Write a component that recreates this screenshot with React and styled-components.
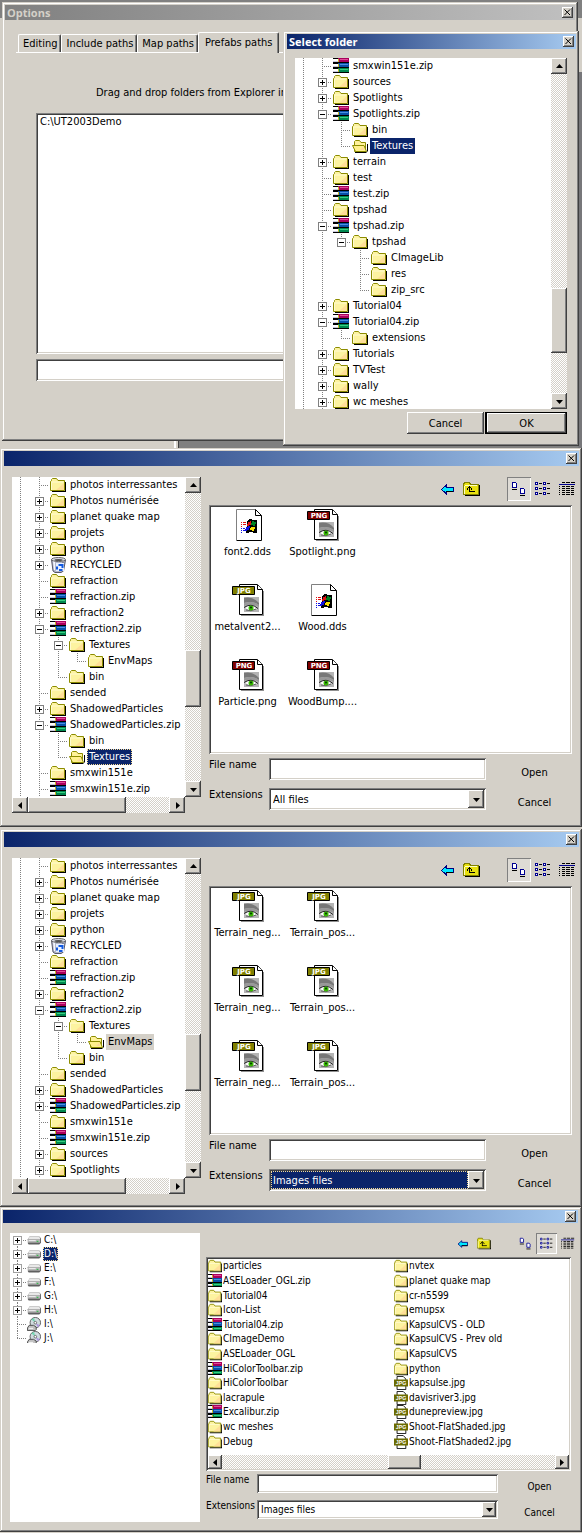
import React from "react";
import styled, { createGlobalStyle, css, ThemeProvider } from "styled-components";

const face = "#d4d0c8";
const navy = "#0a246a";

const regular = { font: 11, line: 14, title: 15, row: 16, cell: 19, icon: 16, tool: 24, bar: 16, field: 22, gap: 8, space: 4, label: 60, button: 75, split: 8, inset: 8, top: 11, foot: 11, frame: "3px 3px 3px 4px" };
const compact = { font: 10, line: 12, title: 13, row: 14, cell: 16, icon: 14, tool: 21, bar: 14, field: 19, gap: 7, space: 3, label: 51, button: 65, split: 6, inset: 7, top: 10, foot: 7, frame: "3px 4px 3px 3px" };

const Global = createGlobalStyle`
  *, *::before, *::after { box-sizing: border-box; }
  body { margin: 0; background: ${face}; color: #000; }
  body, button, input, select { font-family: "DejaVu Sans Condensed", "DejaVu Sans", sans-serif; }
  button, input, select { margin: 0; padding: 0; border: 0; border-radius: 0; font-size: inherit; color: inherit; }
  svg { display: block; flex: none; }
`;

const raised = css`
  background: ${face};
  box-shadow: inset -1px -1px #404040, inset 1px 1px #fff, inset -2px -2px #808080;
`;
const sunken = css`
  background: #fff;
  padding: 2px;
  box-shadow: inset 1px 1px #808080, inset -1px -1px #fff, inset 2px 2px #404040, inset -2px -2px ${face};
`;

const Page = styled.main`
  display: flex;
  flex-direction: column;
`;

const Window = styled.section`
  display: flex;
  flex-direction: column;
  padding: ${(p) => p.theme.frame};
  background: ${face};
  font-size: ${(p) => p.theme.font}px;
  line-height: ${(p) => p.theme.line}px;
  box-shadow: inset -1px -1px #404040, inset 1px 1px ${face}, inset -2px -2px #808080, inset 2px 2px #fff;
`;

const TitleBar = styled.header`
  display: flex;
  align-items: center;
  justify-content: space-between;
  height: ${(p) => p.theme.title}px;
  padding: 0 2px;
  color: ${(p) => (p.$idle ? face : "#fff")};
  background: ${(p) => (p.$idle ? "linear-gradient(90deg, #808080, #c0c0c0)" : `linear-gradient(90deg, ${navy}, #a6caf0)`)};
`;
const Title = styled.h2`
  margin: 0;
  font-family: "Open Sans", sans-serif;
  font-size: 11px;
  font-weight: 700;
  line-height: 15px;
`;
const CloseButton = styled.button`
  ${raised}
  display: grid;
  place-items: center;
  width: 11px;
  height: 11px;
  color: #000;
`;

/* Desktop with the two stacked dialogs */
const Desktop = styled.div`
  position: relative;
  height: 448px;
  background:
    linear-gradient(#808080, #808080) 0 0 / 100% 18px no-repeat,
    linear-gradient(#77777a, #77777a) 100% 72px / 4px 100% no-repeat,
    linear-gradient(#404040, #404040) 178px 100% / 1px 8px no-repeat,
    linear-gradient(#808080, #808080) 179px 100% / 100% 8px no-repeat,
    linear-gradient(#fff, #fff) 174px 100% / 2px 8px no-repeat,
    ${face};
`;
const OptionsWindow = styled(Window)`
  position: absolute;
  top: 2px;
  left: 2px;
  right: 4px;
  padding: 3px;
`;
const FolderWindow = styled(Window)`
  position: absolute;
  top: 31px;
  left: 283px;
  right: 3px;
`;

const Tabs = styled.div`
  display: flex;
  align-items: flex-end;
  margin: 12px 14px 0 11px;
  padding-left: 2px;
  border-bottom: 1px solid #fff;
`;
const Tab = styled.button`
  height: ${(p) => (p.$on ? 21 : 18)}px;
  margin-bottom: ${(p) => (p.$on ? -1 : 0)}px;
  padding: ${(p) => (p.$on ? "0 6px 2px" : "0 3px 0 4px")};
  background: ${face};
  border-top: 1px solid #fff;
  border-left: 1px solid #fff;
  border-right: 1px solid #404040;
  border-radius: 2px 2px 0 0;
  box-shadow: inset -1px 0 #808080;
`;
const OptionsBody = styled.div`
  display: flex;
  flex-direction: column;
  gap: 5px;
  padding: 33px 31px 57px;
`;
const Hint = styled.p`
  margin: 0 0 8px 60px;
  white-space: nowrap;
  overflow: hidden;
`;
const PathList = styled.ul`
  ${sunken}
  margin: 0;
  list-style: none;
  height: 241px;
`;
const PathItem = styled.li`
  padding: 0 2px;
`;
const TextInput = styled.input`
  ${sunken}
  width: 100%;
  min-width: 0;
  height: ${(p) => p.theme.field}px;
  padding: 2px 4px;
  outline: 0;
`;

/* Tree */
const FolderBody = styled.div`
  display: flex;
  flex-direction: column;
  gap: 3px;
  padding: 9px 9px 9px 8px;
`;
const TreeFrame = styled.div`
  display: grid;
  grid-template-columns: minmax(0, 1fr) auto;
  align-self: ${(p) => (p.$fill ? "stretch" : "start")};
  background: ${face};
`;
const Tree = styled.ul`
  margin: 0;
  padding: 0;
  list-style: none;
  background: #fff;
  overflow: hidden;
  ${(p) => p.$clip && css`height: 351px;`}
`;
const DriveTree = styled(Tree)`
  display: grid;
  grid-auto-rows: 1fr;
  height: 110px;
`;
const TreeRow = styled.li`
  display: flex;
  align-items: center;
  height: ${(p) => p.theme.row}px;
  margin-left: ${(p) => (p.theme.row === 16 ? -1 : 0)}px;
`;
const Expander = styled.button`
  background: none;
`;
const NodeIcon = styled.span`
  margin: 0 2px 0 1px;
`;
const NodeLabel = styled.span`
  height: ${(p) => p.theme.row}px;
  line-height: ${(p) => p.theme.row}px;
  padding: 0 ${(p) => (p.theme.row === 16 ? 2 : 1)}px;
  white-space: nowrap;
  ${(p) => p.$state === "muted" && css`background: ${face};`}
  ${(p) => (p.$state === "on" || p.$state === "focus") && css`background: ${navy}; color: #fff;`}
  ${(p) => p.$state === "focus" && css`outline: 1px dotted #f5db95; outline-offset: -1px;`}
`;

/* Scroll bars */
const Bar = styled.div`
  display: flex;
  flex-direction: ${(p) => (p.$down ? "column" : "row")};
  ${(p) => (p.$down ? "width" : "height")}: ${(p) => p.theme.bar}px;
  background: conic-gradient(#fff 25%, ${face} 0 50%, #fff 0 75%, ${face} 0) 0 0 / 2px 2px;
`;
const ArrowButton = styled.button`
  ${raised}
  display: grid;
  place-items: center;
  flex: none;
  width: ${(p) => p.theme.bar}px;
  height: ${(p) => p.theme.bar}px;
`;
const Track = styled.span`
  flex: ${(p) => p.$share} 1 0;
`;
const Thumb = styled.span`
  ${raised}
  flex: ${(p) => p.$share} 1 0;
`;

/* File browser */
const Browser = styled.div`
  display: grid;
  grid-template-columns: ${(p) => (p.theme.row === 16 ? 189 : 190)}px minmax(0, 1fr);
  gap: ${(p) => p.theme.split}px;
  padding: ${(p) => p.theme.top}px 0 ${(p) => p.$foot ?? p.theme.foot}px ${(p) => p.theme.inset}px;
`;
const DriveFrame = styled.div`
  background: #fff;
`;
const Pane = styled.div`
  display: flex;
  flex-direction: column;
  gap: ${(p) => p.theme.space}px;
`;
const Toolbar = styled.div`
  display: flex;
  justify-content: flex-end;
`;
const ToolButton = styled.button`
  display: grid;
  place-items: center;
  width: ${(p) => p.theme.tool}px;
  height: ${(p) => p.theme.tool}px;
  background: ${(p) => (p.$on ? "#dedbd5" : "none")};
  ${(p) => p.$on && css`box-shadow: inset 1px 1px #808080, inset -1px -1px #fff;`}
  ${(p) => p.$apart && css`margin-left: ${p.theme.tool}px;`}
`;
const IconView = styled.ul`
  ${sunken}
  flex: 1;
  display: grid;
  grid-template-columns: repeat(2, 75px);
  grid-auto-rows: 75px;
  margin: 0 7px 0 0;
  list-style: none;
`;
const IconItem = styled.li`
  display: flex;
  flex-direction: column;
  align-items: center;
  gap: 4px;
  padding: 2px 2px 0 0;
  white-space: nowrap;
`;
const ListFrame = styled.div`
  ${sunken}
  display: flex;
  flex-direction: column;
  justify-content: space-between;
  height: 214px;
  margin-right: 7px;
`;
const ListView = styled.ul`
  display: grid;
  grid-template-rows: repeat(13, 1fr);
  grid-auto-flow: column;
  grid-auto-columns: 186px;
  height: 190px;
  margin: 0;
  padding: 0;
  list-style: none;
  overflow: hidden;
`;
const ListItem = styled.li`
  display: flex;
  align-items: center;
  gap: 1px;
  white-space: nowrap;
`;
const Form = styled.form`
  display: grid;
  grid-template-columns: minmax(0, 1fr) ${(p) => p.theme.button}px;
  gap: ${(p) => (p.theme.row === 16 ? 11 : 9)}px;
  margin-right: ${(p) => (p.theme.row === 16 ? 7 : 6)}px;
`;
const Fields = styled.div`
  display: flex;
  flex-direction: column;
  gap: ${(p) => p.theme.gap}px;
`;
const Field = styled.div`
  display: grid;
  grid-template-columns: ${(p) => p.theme.label}px minmax(0, 1fr);
  align-items: start;
`;
const SelectFrame = styled.div`
  ${sunken}
  display: flex;
  height: ${(p) => p.theme.field}px;
`;
const Select = styled.select`
  flex: 1;
  min-width: 0;
  appearance: none;
  padding: 0 2px;
  background: ${(p) => (p.$focus ? navy : "#fff")};
  color: ${(p) => (p.$focus ? "#fff" : "#000")};
  outline: ${(p) => (p.$focus ? "1px dotted #f5db95" : "0")};
  outline-offset: -1px;
`;
const SelectArrow = styled.span`
  ${raised}
  display: grid;
  place-items: center;
  width: ${(p) => p.theme.bar}px;
`;
const Commands = styled.div`
  display: flex;
  flex-direction: column;
  gap: ${(p) => p.theme.gap}px;
  padding-top: 3px;
`;
const FlatButton = styled.button`
  height: ${(p) => p.theme.field}px;
  background: none;
`;
const DialogButtons = styled.div`
  display: flex;
  justify-content: flex-end;
  gap: 1px;
`;
const PushButton = styled.button`
  ${raised}
  width: ${(p) => (p.$main ? 82 : 77)}px;
  height: 22px;
  ${(p) => p.$main && css`
    border: 1px solid #000;
    border-left-width: 2px;
  `}
`;
const Spaced = styled.div`
  margin-top: 2px;
`;

/* Drawings */
const Cross = () => (
  <svg width="7" height="7" viewBox="0 0 7 7" aria-hidden="true">
    <path d="M0.5 0.5 6 6M6 0.5 0.5 6" stroke="#000" fill="none" />
  </svg>
);
const tips = { up: "M0 5 3.5 1 7 5z", down: "M0 2h7L3.5 6z", left: "M5 0v7L1 3.5z", right: "M2 0v7l4-3.5z" };
const Tip = ({ to }) => (
  <svg width="7" height="7" viewBox="0 0 7 7" aria-hidden="true"><path d={tips[to]} /></svg>
);

/* One tree column: | line, t tee, l corner, + and - boxes, m box without a line below, p box without a line above */
function Guide({ kind, compact: small }) {
  const w = small ? 16 : 19;
  const h = small ? 14 : 16;
  const c = small ? 7 : 9;
  const m = small ? 7 : 8;
  const line = small ? "#a0a0a0" : "#808080";
  const box = "+-mp".includes(kind);
  const above = "|t+-lm".includes(kind);
  const below = "|t+-p".includes(kind);
  return (
    <svg width={w} height={h} viewBox={`0 0 ${w} ${h}`} shapeRendering="crispEdges" aria-hidden="true">
      <g stroke="#808080" strokeDasharray="1 1" fill="none">
        {above && <path d={`M${c + 0.5} 0V${m + 1}`} />}
        {below && <path d={`M${c + 0.5} ${m}V${h}`} />}
        {kind !== "|" && kind !== " " && <path d={`M${c} ${m + 0.5}H${w + 1}`} />}
      </g>
      {box && (
        <>
          <rect x={c - 3.5} y={m - 3.5} width={8} height={8} fill="#fff" stroke={line} />
          <path d={`M${c - 2} ${m + 0.5}h5`} stroke="#000" />
          {"+p".includes(kind) && <path d={`M${c + 0.5} ${m - 2}v5`} stroke="#000" />}
        </>
      )}
    </svg>
  );
}

const art = {
  folder: (
    <>
      <path d="M2 14h13V5h1v10H2z" fill="#000" />
      <path d="M.5 13.500V4.500l1-1v-1l1-1h4l1.500 2h6.500v10z" fill="#fdf3a0" stroke="#8c8c00" />
      <path d="M2 5h11M1.500 5v8" stroke="#fffbd0" />
      <path d="M6 13h8V6z" fill="#ffdf98" />
    </>
  ),
  open: (
    <>
      <path d="M3 14h11l1-1V6h1v7l-2 2H3z" fill="#000" />
      <path d="M2.500 13.500v-10l1-1h4l1.500 2h4.500v9z" fill="#fff29a" stroke="#8c8c00" />
      <path d="M.5 7.500h11.500l2.500 6H3.500z" fill="#fff08c" stroke="#8c8c00" />
      <path d="M8 12h4l-1-3z" fill="#ffd79c" />
    </>
  ),
  zip: (
    <g shapeRendering="crispEdges">
      {[["#a8005c", "#e04c98"], ["#0850a8", "#4890e0"], ["#008850", "#38d080"]].map(([dark, light], i) => (
        <g key={dark} transform={`translate(0 ${i * 5})`}>
          <path d="M0 0h5v1H0zM0 4h16v1H0z" fill="#000" />
          <path d="M0 1h5v2H0z" fill="#fff" />
          <path d="M0 3h5v1H0z" fill="#c8c8dc" />
          <path d="M5 0h11v4H5z" fill={dark} />
          <path d="M7 1h8v1H7z" fill={light} />
          <path d="M5 1h1v3H5z" fill="#c8b820" />
        </g>
      ))}
    </g>
  ),
  bin: (
    <>
      <path d="M1.500 2.500 3 14l2 1.500h6L13.500 14 15.500 3z" fill="#b4b8c8" stroke="#585868" />
      <path d="M3 4l1 9h1V4z" fill="#f4f6ff" />
      <path d="M12 5l-1 9h1l2-9z" fill="#7c8098" />
      <ellipse cx="8.500" cy="2.500" rx="7" ry="2" fill="#d8dae4" stroke="#666" />
      <ellipse cx="8.500" cy="3" rx="4" ry="1" fill="#555" />
      <rect x="6" y="6" width="8" height="8" fill="#e8f0ff" />
      <path d="M8.500 8h4v3M7 9.500v3M9 13h3.500" stroke="#1058e0" strokeWidth="2" fill="none" />
    </>
  ),
  drive: (
    <>
      <path d="M1 7l2-3h11l2 2v5l-2 2H2l-1-1z" fill="#606060" />
      <path d="M1 7l2-3h11l1 2v1z" fill="#e8e8e8" />
      <path d="M1 7h14v4H1z" fill="#b8b8b8" />
      <path d="M2 8h8v1H2z" fill="#f0f0f0" />
      <path d="M11 9h2v1h-2z" fill="#10c030" />
    </>
  ),
  disc: (
    <>
      <circle cx="9.500" cy="6.500" r="6" fill="#d0dce0" stroke="#505050" />
      <path d="M9.500 6.500 5 2.500l3-1.500z" fill="#70d8b0" />
      <path d="M9.500 6.500l5 3-2 2.500z" fill="#b098e0" />
      <circle cx="9.500" cy="6.500" r="1.500" fill="#fff" stroke="#606060" />
      <path d="M.5 12.500l2-3h5l3 2v3l-1 1h-9z" fill="#c0c0c0" stroke="#404040" />
      <path d="M2 13h5" stroke="#fff" />
    </>
  ),
  jpg: (
    <>
      <path d="M3.500.5h7l3 3v12h-10z" fill="#fff" stroke="#000" />
      <path d="M0 4h16v8H0z" fill="#6c6c00" />
      <text x="8" y="10" fontSize="6" fontWeight="700" textAnchor="middle" fill="#fff" fontFamily="Liberation Sans, sans-serif">JPG</text>
    </>
  ),
};
const SmallIcon = ({ name, size = 16 }) => (
  <svg width={size} height={size} viewBox="0 0 16 16" aria-hidden="true">{art[name]}</svg>
);

function FileIcon({ type }) {
  if (type === "DDS") {
    return (
      <svg width="32" height="32" viewBox="0 0 32 32" aria-hidden="true">
        <path d="M4.500.5h19l6 6v25h-25z" fill="#fff" />
        <path d="M4.500 31V.5h19" fill="none" stroke="#808080" />
        <path d="M23.500.5v6h6v25h-25" fill="none" stroke="#000" />
        <path d="M23.500.5l6 6" stroke="#000" />
        <g shapeRendering="crispEdges">
          <path d="M15 12l3-2 3 1h4v13l-3 0-3-1-5 1z" fill="#000" />
          <path d="M16 13l3-1v4l-4 1z" fill="#e01010" />
          <path d="M20 12l4 1-1 4-4-1z" fill="#008020" />
          <path d="M14 18l4-1-1 4-4 1z" fill="#1010e0" />
          <path d="M19 18l4 0-1 4-4-1z" fill="#f8e000" />
          <path d="M9 13.500h1m1 0h3M9 15.500h1m1 0h3M9 17.500h1" stroke="#e01010" />
          <path d="M9 19.500h1m1 0h2M9 21.500h1m1 0h2M9 23.500h1" stroke="#1010e0" />
        </g>
      </svg>
    );
  }
  return (
    <svg width="32" height="32" viewBox="0 0 32 32" aria-hidden="true">
      <path d="M31 7h1v25H9v-1h22z" fill="#909090" />
      <path d="M7.500.5h18l5 5v25h-23z" fill="#fff" stroke="#000" />
      <path d="M25.500 1v4.500h5" fill="#fff" stroke="#000" />
      <path d="M12 13h15v15H12z" fill="#b4b4b4" />
      <path d="M12 14q9-2 15 5v2q-7-5-15-2z" fill="#787878" />
      <path d="M12 19q8-3 15 2v2q-7-4-15-1z" fill="#989898" />
      <path d="M13 24q6-5 12 0-6 4-10 1z" fill="#fff" />
      <path d="M12 23.500q7-5 14 1" stroke="#222" fill="none" />
      <path d="M14 26q5 2 10-1" stroke="#606060" fill="none" />
      <circle cx="19" cy="24" r="2.500" fill="#38b800" />
      <circle cx="19" cy="23.500" r="1" fill="#003800" />
      <path d="M.5 2.500h22v8H.5z" fill={type === "PNG" ? "#800000" : "#808000"} stroke="#000" />
      <text x="12" y="9" fontSize="7" fontWeight="700" textAnchor="middle" fill="#fff" fontFamily="DejaVu Sans, sans-serif">{type}</text>
    </svg>
  );
}

const toolArt = {
  back: (
    <>
      <path d="M2.500 8.500 7 4.500v2h7v4H7v2z" fill="#00e8ff" stroke="#000080" />
      <path d="M7 10.500h7" stroke="#000" />
    </>
  ),
  up: (
    <>
      <path d="M2 14h14V4h1v11H2z" fill="#000" />
      <path d="M.5 13.500v-10l1-2h5l1 2h8v10z" fill="#e8e010" stroke="#808000" />
      <path d="M2 4h12M1.500 5v8" stroke="#ffffc0" />
      <path d="M6.500 11V6M4 8.500l2.500-3 2.500 3M6 10.500h6" stroke="#000" fill="none" />
    </>
  ),
  large: (
    <>
      <path d="M1.500 1.500h3l1 1v4h-4zM9.500 7.500h3l1 1v4h-4z" fill="#fff" stroke="#000090" />
      <path d="M1 8.500h5M9 14.500h5" stroke="#000" />
    </>
  ),
  list: (
    <>
      {[2, 7, 12].map((y) => (
        <g key={y}>
          <path d={`M.5 ${y - 0.5}h2v2h-2zM8.500 ${y - 0.5}h2v2h-2z`} fill="#fff" stroke="#000090" />
          <path d={`M4 ${y + 0.5}h3M12 ${y + 0.5}h3`} stroke="#000" />
        </g>
      ))}
    </>
  ),
  details: (
    <>
      <path d="M3 1.500h3m1 0h4m1 0h4" stroke="#000" />
      <path d="M0 3.500h16" stroke="#000090" />
      <path d="M0 5.500h1m2 0h3m1 0h4m1 0h3M0 7.500h1m2 0h3m1 0h4m1 0h3M0 9.500h1m2 0h3m1 0h4m1 0h3M0 11.500h1m2 0h3m1 0h4m1 0h3M0 13.500h1m2 0h3m1 0h4m1 0h3" stroke="#000" />
    </>
  ),
};

/* Composed parts */
function ScrollBar({ down, before, thumb, after }) {
  return (
    <Bar $down={down}>
      <ArrowButton type="button" aria-label={down ? "Scroll up" : "Scroll left"}><Tip to={down ? "up" : "left"} /></ArrowButton>
      <Track $share={before} />
      <Thumb $share={thumb} />
      <Track $share={after} />
      <ArrowButton type="button" aria-label={down ? "Scroll down" : "Scroll right"}><Tip to={down ? "down" : "right"} /></ArrowButton>
    </Bar>
  );
}

function TitleRow({ text, idle }) {
  return (
    <TitleBar $idle={idle}>
      <Title>{text}</Title>
      <CloseButton type="button" aria-label="Close"><Cross /></CloseButton>
    </TitleBar>
  );
}

function TreeNode({ node, small }) {
  const [guides, icon, label, state] = node;
  return (
    <TreeRow>
      {guides.split("").map((kind, i) =>
        "+-mp".includes(kind) ? (
          <Expander key={i} type="button" aria-label={`Toggle ${label}`}><Guide kind={kind} compact={small} /></Expander>
        ) : (
          <Guide key={i} kind={kind} compact={small} />
        )
      )}
      <NodeIcon><SmallIcon name={icon} size={small ? 14 : 16} /></NodeIcon>
      <NodeLabel $state={state}>{label}</NodeLabel>
    </TreeRow>
  );
}

const tools = [["back", "Back"], ["up", "Up one level"], ["large", "Large icons"], ["list", "List"], ["details", "Details"]];
function Tools({ active, small }) {
  const size = small ? 14 : 17;
  return (
    <Toolbar>
      {tools.map(([name, label]) => (
        <ToolButton key={name} type="button" aria-label={label} $on={name === active} $apart={name === "large"}>
          <svg width={size} height={size} viewBox="0 0 17 17" shapeRendering={small ? "auto" : "crispEdges"} aria-hidden="true">{toolArt[name]}</svg>
        </ToolButton>
      ))}
    </Toolbar>
  );
}

function FileForm({ id, filter, focus }) {
  return (
    <Form onSubmit={(e) => e.preventDefault()}>
      <Fields>
        <Field>
          <label htmlFor={`${id}-name`}>File name</label>
          <TextInput id={`${id}-name`} type="text" />
        </Field>
        <Field>
          <label htmlFor={`${id}-ext`}>Extensions</label>
          <SelectFrame>
            <Select id={`${id}-ext`} defaultValue={filter} $focus={focus}>
              <option>All files</option>
              <option>Images files</option>
            </Select>
            <SelectArrow><Tip to="down" /></SelectArrow>
          </SelectFrame>
        </Field>
      </Fields>
      <Commands>
        <FlatButton type="submit">Open</FlatButton>
        <FlatButton type="button">Cancel</FlatButton>
      </Commands>
    </Form>
  );
}

function BrowserWindow({ id, nodes, files, filter, focus, scroll, foot }) {
  return (
    <Window>
      <TitleRow />
      <Browser $foot={foot}>
        <TreeFrame>
          <Tree>{nodes.map((n, i) => <TreeNode key={i} node={n} />)}</Tree>
          <ScrollBar down before={scroll[0]} thumb={scroll[1]} after={scroll[2]} />
          <ScrollBar before={0} thumb={98} after={43} />
        </TreeFrame>
        <Pane>
          <Tools active="large" />
          <IconView>
            {files.map(([type, name], i) => (
              <IconItem key={i}><FileIcon type={type} />{name}</IconItem>
            ))}
          </IconView>
          <FileForm id={id} filter={filter} focus={focus} />
        </Pane>
      </Browser>
    </Window>
  );
}

const folderNodes = [
  ["|t", "zip", "smxwin151e.zip"], ["|+", "folder", "sources"], ["|+", "folder", "Spotlights"], ["|-", "zip", "Spotlights.zip"],
  ["||t", "folder", "bin"], ["||l", "open", "Textures", "on"], ["|+", "folder", "terrain"], ["|t", "folder", "test"],
  ["|t", "zip", "test.zip"], ["|t", "folder", "tpshad"], ["|-", "zip", "tpshad.zip"], ["||m", "folder", "tpshad"],
  ["|| t", "folder", "CImageLib"], ["|| t", "folder", "res"], ["|| l", "folder", "zip_src"], ["|+", "folder", "Tutorial04"],
  ["|-", "zip", "Tutorial04.zip"], ["||l", "folder", "extensions"], ["|+", "folder", "Tutorials"], ["|+", "folder", "TVTest"],
  ["|+", "folder", "wally"], ["|+", "folder", "wc meshes"],
];

const shared = [
  ["|t", "folder", "photos interressantes"], ["|+", "folder", "Photos numérisée"], ["|+", "folder", "planet quake map"],
  ["|+", "folder", "projets"], ["|+", "folder", "python"], ["|+", "bin", "RECYCLED"], ["|t", "folder", "refraction"],
  ["|t", "zip", "refraction.zip"], ["|+", "folder", "refraction2"], ["|-", "zip", "refraction2.zip"], ["||-", "folder", "Textures"],
];
const texturesNodes = [
  ...shared,
  ["|||l", "folder", "EnvMaps"], ["||l", "folder", "bin"], ["|t", "folder", "sended"], ["|+", "folder", "ShadowedParticles"],
  ["|-", "zip", "ShadowedParticles.zip"], ["||t", "folder", "bin"], ["||l", "open", "Textures", "focus"],
  ["|t", "folder", "smxwin151e"], ["|t", "zip", "smxwin151e.zip"],
];
const envMapsNodes = [
  ...shared,
  ["|||l", "open", "EnvMaps", "muted"], ["||l", "folder", "bin"], ["|t", "folder", "sended"], ["|+", "folder", "ShadowedParticles"],
  ["|+", "zip", "ShadowedParticles.zip"], ["|t", "folder", "smxwin151e"], ["|t", "zip", "smxwin151e.zip"],
  ["|+", "folder", "sources"], ["|+", "folder", "Spotlights"],
];
const drives = [
  ["p", "drive", "C:\\"], ["+", "drive", "D:\\", "focus"], ["+", "drive", "E:\\"], ["+", "drive", "F:\\"],
  ["+", "drive", "G:\\"], ["+", "drive", "H:\\"], ["t", "disc", "I:\\"], ["l", "disc", "J:\\"],
];
const textureFiles = [
  ["DDS", "font2.dds"], ["PNG", "Spotlight.png"], ["JPG", "metalvent2..."],
  ["DDS", "Wood.dds"], ["PNG", "Particle.png"], ["PNG", "WoodBump...."],
];
const envFiles = [0, 1, 2].flatMap(() => [["JPG", "Terrain_neg..."], ["JPG", "Terrain_pos..."]]);
const driveFiles = [
  ["folder", "particles"], ["zip", "ASELoader_OGL.zip"], ["folder", "Tutorial04"], ["folder", "Icon-List"], ["zip", "Tutorial04.zip"],
  ["folder", "CImageDemo"], ["folder", "ASELoader_OGL"], ["zip", "HiColorToolbar.zip"], ["folder", "HiColorToolbar"],
  ["folder", "lacrapule"], ["zip", "Excalibur.zip"], ["folder", "wc meshes"], ["folder", "Debug"],
  ["folder", "nvtex"], ["folder", "planet quake map"], ["folder", "cr-n5599"], ["folder", "emupsx"], ["folder", "KapsulCVS - OLD"],
  ["folder", "KapsulCVS - Prev old"], ["folder", "KapsulCVS"], ["folder", "python"], ["jpg", "kapsulse.jpg"],
  ["jpg", "davisriver3.jpg"], ["jpg", "dunepreview.jpg"], ["jpg", "Shoot-FlatShaded.jpg"], ["jpg", "Shoot-FlatShaded2.jpg"],
];
const tabs = ["Editing", "Include paths", "Map paths", "Prefabs paths"];

export default function App() {
  return (
    <ThemeProvider theme={regular}>
      <Global />
      <Page>
        <Desktop>
          <OptionsWindow>
            <TitleRow text="Options" idle />
            <Tabs role="tablist">
              {tabs.map((name, i) => (
                <Tab key={name} type="button" role="tab" aria-selected={i === 3} $on={i === 3}>{name}</Tab>
              ))}
            </Tabs>
            <OptionsBody>
              <Hint>Drag and drop folders from Explorer inside</Hint>
              <PathList><PathItem>C:\UT2003Demo</PathItem></PathList>
              <TextInput type="text" aria-label="Path" />
            </OptionsBody>
          </OptionsWindow>
          <FolderWindow>
            <TitleRow text="Select folder" />
            <FolderBody>
              <TreeFrame $fill>
                <Tree $clip>{folderNodes.map((n, i) => <TreeNode key={i} node={n} />)}</Tree>
                <ScrollBar down before={214} thumb={65} after={40} />
              </TreeFrame>
              <DialogButtons>
                <PushButton type="button">Cancel</PushButton>
                <PushButton type="button" $main>OK</PushButton>
              </DialogButtons>
            </FolderBody>
          </FolderWindow>
        </Desktop>
        <BrowserWindow id="textures" nodes={texturesNodes} files={textureFiles} filter="All files" scroll={[157, 57, 74]} />
        <Spaced>
          <BrowserWindow id="envmaps" nodes={envMapsNodes} files={envFiles} filter="Images files" focus scroll={[160, 57, 71]} foot={10} />
        </Spaced>
        <ThemeProvider theme={compact}>
          <Window>
            <TitleRow />
            <Browser>
              <DriveFrame>
                <DriveTree>{drives.map((n, i) => <TreeNode key={i} node={n} small />)}</DriveTree>
              </DriveFrame>
              <Pane>
                <Tools active="list" small />
                <ListFrame>
                  <ListView>
                    {driveFiles.map(([icon, name]) => (
                      <ListItem key={name}><SmallIcon name={icon} size={14} />{name}</ListItem>
                    ))}
                  </ListView>
                  <ScrollBar before={166} thumb={34} after={134} />
                </ListFrame>
                <FileForm id="drives" filter="Images files" />
              </Pane>
            </Browser>
          </Window>
        </ThemeProvider>
      </Page>
    </ThemeProvider>
  );
}
